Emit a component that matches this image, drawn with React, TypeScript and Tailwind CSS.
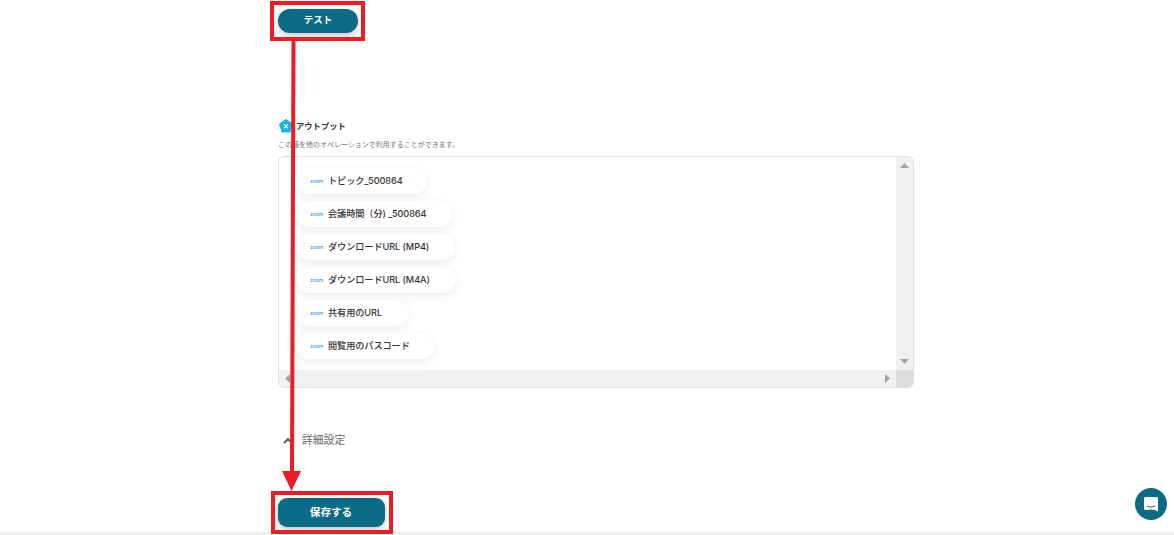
import React from "react";

const items = [
  { label: "トピック_500864", w: "w-[131px]", mt: "mt-0" },
  { label: "会議時間（分) _500864", w: "w-[156px]", mt: "mt-[7px]" },
  { label: "ダウンロードURL (MP4)", w: "w-[159px]", mt: "mt-[7px]" },
  { label: "ダウンロードURL (M4A)", w: "w-[160px]", mt: "mt-[7px]" },
  { label: "共有用のURL", w: "w-[113px]", mt: "mt-[7px]" },
  { label: "閲覧用のパスコード", w: "w-[138px]", mt: "mt-[7px]" },
];

function Pill({ label, w, mt }: { label: string; w: string; mt: string }) {
  return (
    <div className={`${w} ${mt} h-[26px] shrink-0 flex items-center rounded-full bg-white pl-[14px] shadow-[0_3px_10px_rgba(0,0,0,0.08)]`}>
      <span className="w-[18px] text-[5px] font-medium leading-none text-[#2d8cff]">zoom</span>
      <span className="text-[9.2px] font-medium tracking-[-0.1px] text-[#333333] whitespace-nowrap">{label}</span>
    </div>
  );
}

export default function App() {
  return (
    <div className="relative h-[535px] w-[1174px] overflow-hidden bg-white font-['Inter','Noto_Sans_CJK_JP',sans-serif]">
      <div className="ml-[278px] flex h-[532px] w-[636px] flex-col items-start pt-[9px]">
        <button className="h-[24px] w-[80px] rounded-full bg-[#0b6b85] pb-[1px] text-[9.5px] font-bold text-white shadow-[0_2px_6px_rgba(0,0,0,0.25)]">
          テスト
        </button>

        <div className="mt-[86px] flex h-[13px] items-center">
          <svg width="14" height="14" viewBox="0 0 14 14" className="ml-[1px]">
            <path d="M7 0.5 L13.5 5 L11 13 L3 13 L0.5 5 Z" fill="#12b8e6" stroke="#12b8e6" strokeLinejoin="round" />
            <path d="M5.2 5.4 L8.8 9.2 M8.8 5.4 L5.2 9.2" stroke="#ffffff" strokeWidth="1.2" />
          </svg>
          <span className="ml-[3px] pt-[1px] text-[8.3px] font-semibold text-[#333333]">アウトプット</span>
        </div>
        <p className="mt-[8px] text-[7px] leading-[10px] text-[#777777]">この値を他のオペレーションで利用することができます。</p>

        <div className="mt-[6px] flex h-[232px] w-[636px] flex-col overflow-hidden rounded-[6px] border border-[#e2e2e2]">
          <div className="flex min-h-0 flex-1">
            <div className="flex flex-1 flex-col items-start pl-[17px] pt-[11px]">
              {items.map((it) => (
                <Pill key={it.label} {...it} />
              ))}
            </div>
            <div className="flex w-[17px] flex-col items-center justify-between bg-[#f1f1f1] py-[6px]">
              <svg width="9" height="5" viewBox="0 0 9 5"><path d="M4.5 0 L9 5 L0 5 Z" fill="#a3a3a3" /></svg>
              <svg width="9" height="5" viewBox="0 0 9 5"><path d="M0 0 L9 0 L4.5 5 Z" fill="#a3a3a3" /></svg>
            </div>
          </div>
          <div className="flex h-[17px] shrink-0">
            <div className="flex flex-1 items-center justify-between bg-[#f1f1f1] px-[6px]">
              <svg width="5" height="9" viewBox="0 0 5 9"><path d="M5 0 L5 9 L0 4.5 Z" fill="#a3a3a3" /></svg>
              <svg width="5" height="9" viewBox="0 0 5 9"><path d="M0 0 L5 4.5 L0 9 Z" fill="#a3a3a3" /></svg>
            </div>
            <div className="w-[17px] bg-[#dcdcdc]" />
          </div>
        </div>

        <div className="mt-[44px] flex h-[16px] items-center">
          <svg width="10" height="7" viewBox="0 0 10 7" className="ml-[5px] mt-[1px]">
            <path d="M1 6 L5 2 L9 6" fill="none" stroke="#555555" strokeWidth="1.8" />
          </svg>
          <span className="ml-[9px] pt-[2px] text-[10.8px] text-[#666666]">詳細設定</span>
        </div>

        <button className="mt-[50px] h-[29px] w-[107px] rounded-[9px] bg-[#0b6b85] pr-[1px] text-[10.6px] font-bold text-white shadow-[0_2px_6px_rgba(0,0,0,0.25)]">
          保存する
        </button>
      </div>
      <div className="h-[3px] bg-[#f0f0f0]" />

      {/* annotations over the page */}
      <div className="absolute left-[270px] top-[1px] h-[40px] w-[95px] border-[4px] border-[#ed1c24]" />
      <div className="absolute left-[271px] top-[491px] h-[43px] w-[122px] border-[4px] border-[#ed1c24]" />
      <svg className="absolute left-[280px] top-[40px]" width="24" height="452" viewBox="0 0 24 452">
        <path d="M13.5 1 L12 432" fill="none" stroke="#ed1c24" strokeWidth="4" />
        <path d="M2 431 L21 431 L11.5 451 Z" fill="#ed1c24" />
      </svg>

      <div className="absolute left-[1135px] top-[488px] flex h-[32px] w-[32px] items-center justify-center rounded-full bg-[#0b6b85]">
        <svg width="16" height="17" viewBox="0 0 16 17">
          <path d="M2.5 1 H13.5 A1.5 1.5 0 0 1 15 2.5 V15.5 L11.5 14 Q8 13.2 2.5 14 A1.5 1.5 0 0 1 1 12.5 V2.5 A1.5 1.5 0 0 1 2.5 1 Z" fill="#ffffff" />
          <path d="M4 10 Q8 12.5 12 10" fill="none" stroke="#0b6b85" strokeWidth="1" />
        </svg>
      </div>
    </div>
  );
}
